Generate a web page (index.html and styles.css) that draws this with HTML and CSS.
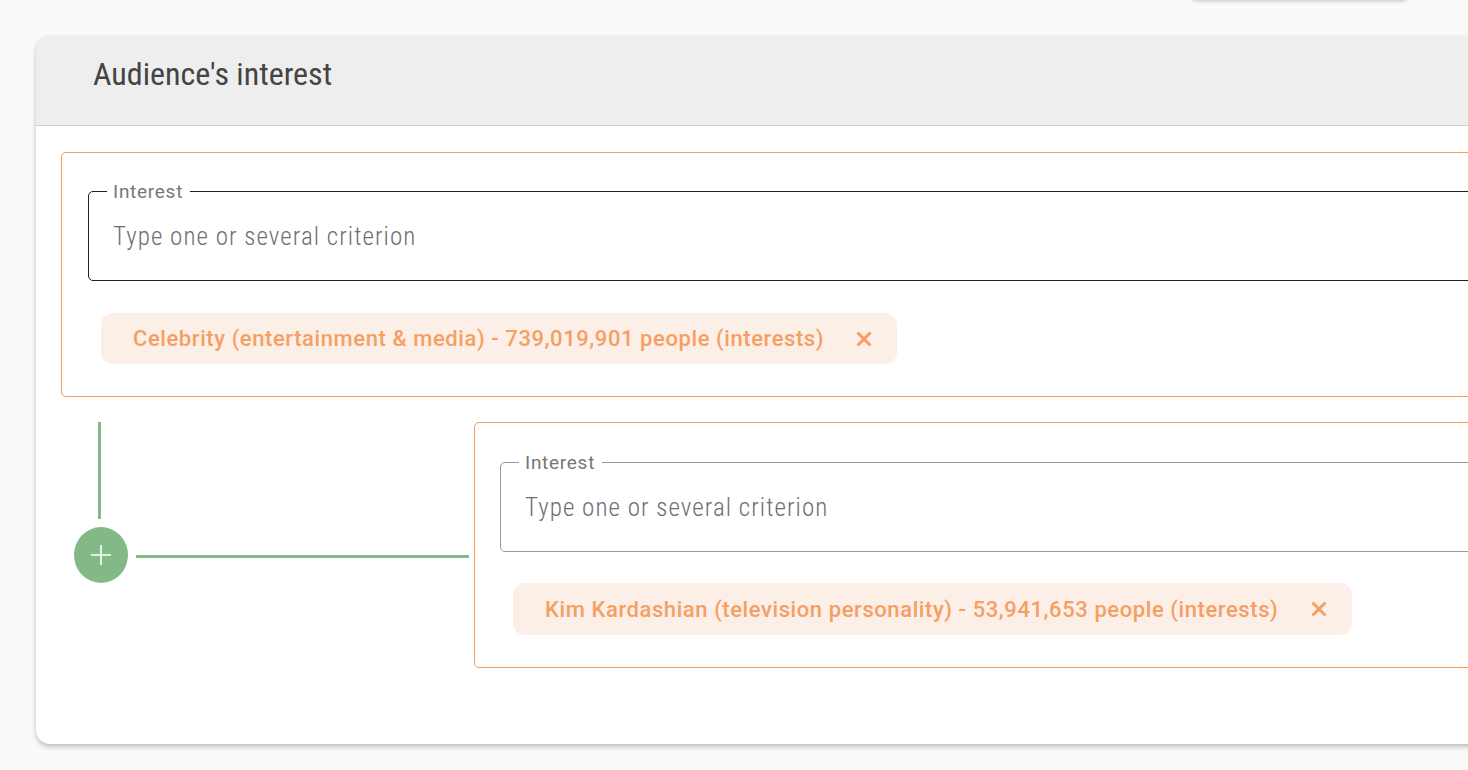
FILE: index.html
```html
<!DOCTYPE html>
<html lang="en">
<head>
<meta charset="utf-8">
<title>Audience's interest</title>
<link rel="stylesheet" href="styles.css">
</head>
<body>
<div class="top-menu"></div>
<main class="card">
  <header class="card-head"><h2 class="card-title">Audience's interest</h2></header>
  <div class="card-body">
    <section class="group">
      <fieldset class="field field-active">
        <legend class="field-label">Interest</legend>
        <span class="placeholder">Type one or several criterion</span>
      </fieldset>
      <div class="chip chip-first">
        <span class="chip-text">Celebrity (entertainment &amp; media) - 739,019,901 people (interests)</span>
        <svg class="chip-x" viewBox="0 0 16 16" width="16" height="16"><path d="M1.5 1.5 14.5 14.5M14.5 1.5 1.5 14.5"/></svg>
      </div>
    </section>
    <div class="branch">
      <div class="connector">
        <div class="stem">
          <div class="line-v"></div>
          <div class="add">
            <svg viewBox="0 0 22 22" width="22" height="22"><path d="M11 1V21M1 11H21"/></svg>
          </div>
        </div>
        <div class="line-h"></div>
      </div>
      <section class="group group-sub">
        <fieldset class="field">
          <legend class="field-label">Interest</legend>
          <span class="placeholder">Type one or several criterion</span>
        </fieldset>
        <div class="chip chip-second">
          <span class="chip-text">Kim Kardashian (television personality) - 53,941,653 people (interests)</span>
          <svg class="chip-x" viewBox="0 0 16 16" width="16" height="16"><path d="M1.5 1.5 14.5 14.5M14.5 1.5 1.5 14.5"/></svg>
        </div>
      </section>
    </div>
  </div>
</main>
</body>
</html>
```
FILE: styles.css
```css
html, body { margin: 0; height: 770px; overflow: hidden; }
body {
  position: relative;
  background: #fafafa;
  font-family: Roboto, "Noto Sans", sans-serif;
  padding: 36px 0 0 36px;
  box-sizing: border-box;
}
.top-menu {
  position: absolute;
  left: 1192px;
  top: -30px;
  width: 215px;
  height: 30px;
  background: #fff;
  border-radius: 4px;
  box-shadow: 0 1px 4px rgba(0,0,0,.22);
}
.card {
  width: 1560px;
  height: 708px;
  background: #fff;
  border-radius: 14px;
  box-shadow: 0 3px 5px rgba(0,0,0,.22), 0 0 3px rgba(0,0,0,.06);
  overflow: hidden;
}
.card-head {
  height: 89px;
  background: #eeeeee;
  border-bottom: 1px solid #cfcfcf;
  padding-left: 57px;
}
.card-title {
  margin: 0;
  font-weight: 400;
  font-size: 32px;
  line-height: 77px;
  color: #444;
  font-stretch: condensed;
}
.card-body { padding: 26px 0 0 25px; }
.group {
  box-sizing: border-box;
  flex: none;
  width: 1500px;
  height: 245px;
  border: 1px solid #f79d59;
  border-radius: 5px;
  padding: 26px 0 0 26px;
}
.group-sub { height: 246px; padding: 27px 0 0 25px; }
.field {
  margin: 0;
  box-sizing: border-box;
  height: 102px;
  padding: 18px 0 0 18px;
  border: 1px solid #999;
  border-radius: 5px;
  min-width: 0;
}
.field-active { border-color: #222; }
.field-label {
  padding: 2px 7px 0 6px;
  font-size: 19px;
  line-height: 22px;
  letter-spacing: .72px;
  color: #777;
  font-stretch: 90%;
}
.placeholder {
  display: block;
  margin-left: 6px;
  font-weight: 300;
  font-size: 25px;
  line-height: 32px;
  letter-spacing: 1.05px;
  color: #6e6e6e;
  font-stretch: 80%;
}
.chip {
  display: inline-flex;
  align-items: center;
  margin: 32px 0 0 13px;
  padding: 0 25px 0 32px;
  background: #fcefe8;
  border-radius: 12px;
  color: #f5a062;
  font-weight: 500;
  font-size: 22px;
  letter-spacing: .58px;
  font-stretch: 88%;
}
.chip-first { height: 51px; gap: 32px; }
.chip-second { height: 52px; gap: 33px; margin-top: 31px; }
.chip-x { fill: none; stroke: #f5a062; stroke-width: 3; }
.branch { display: flex; margin-top: 25px; }
.connector { display: flex; flex: none; width: 413px; height: 161px; }
.stem { display: flex; flex-direction: column; margin-left: 13px; width: 54px; }
.line-v { width: 3px; height: 97px; background: #82b987; margin: 0 0 8px 24px; }
.add {
  width: 54px;
  height: 56px;
  border-radius: 50%;
  background: #82b987;
  display: flex;
  align-items: center;
  justify-content: center;
}
.add svg { fill: none; stroke: #fff; stroke-width: 1.6; }
.line-h { width: 333px; height: 3px; background: #82b987; margin: 133px 0 0 8px; }
```
